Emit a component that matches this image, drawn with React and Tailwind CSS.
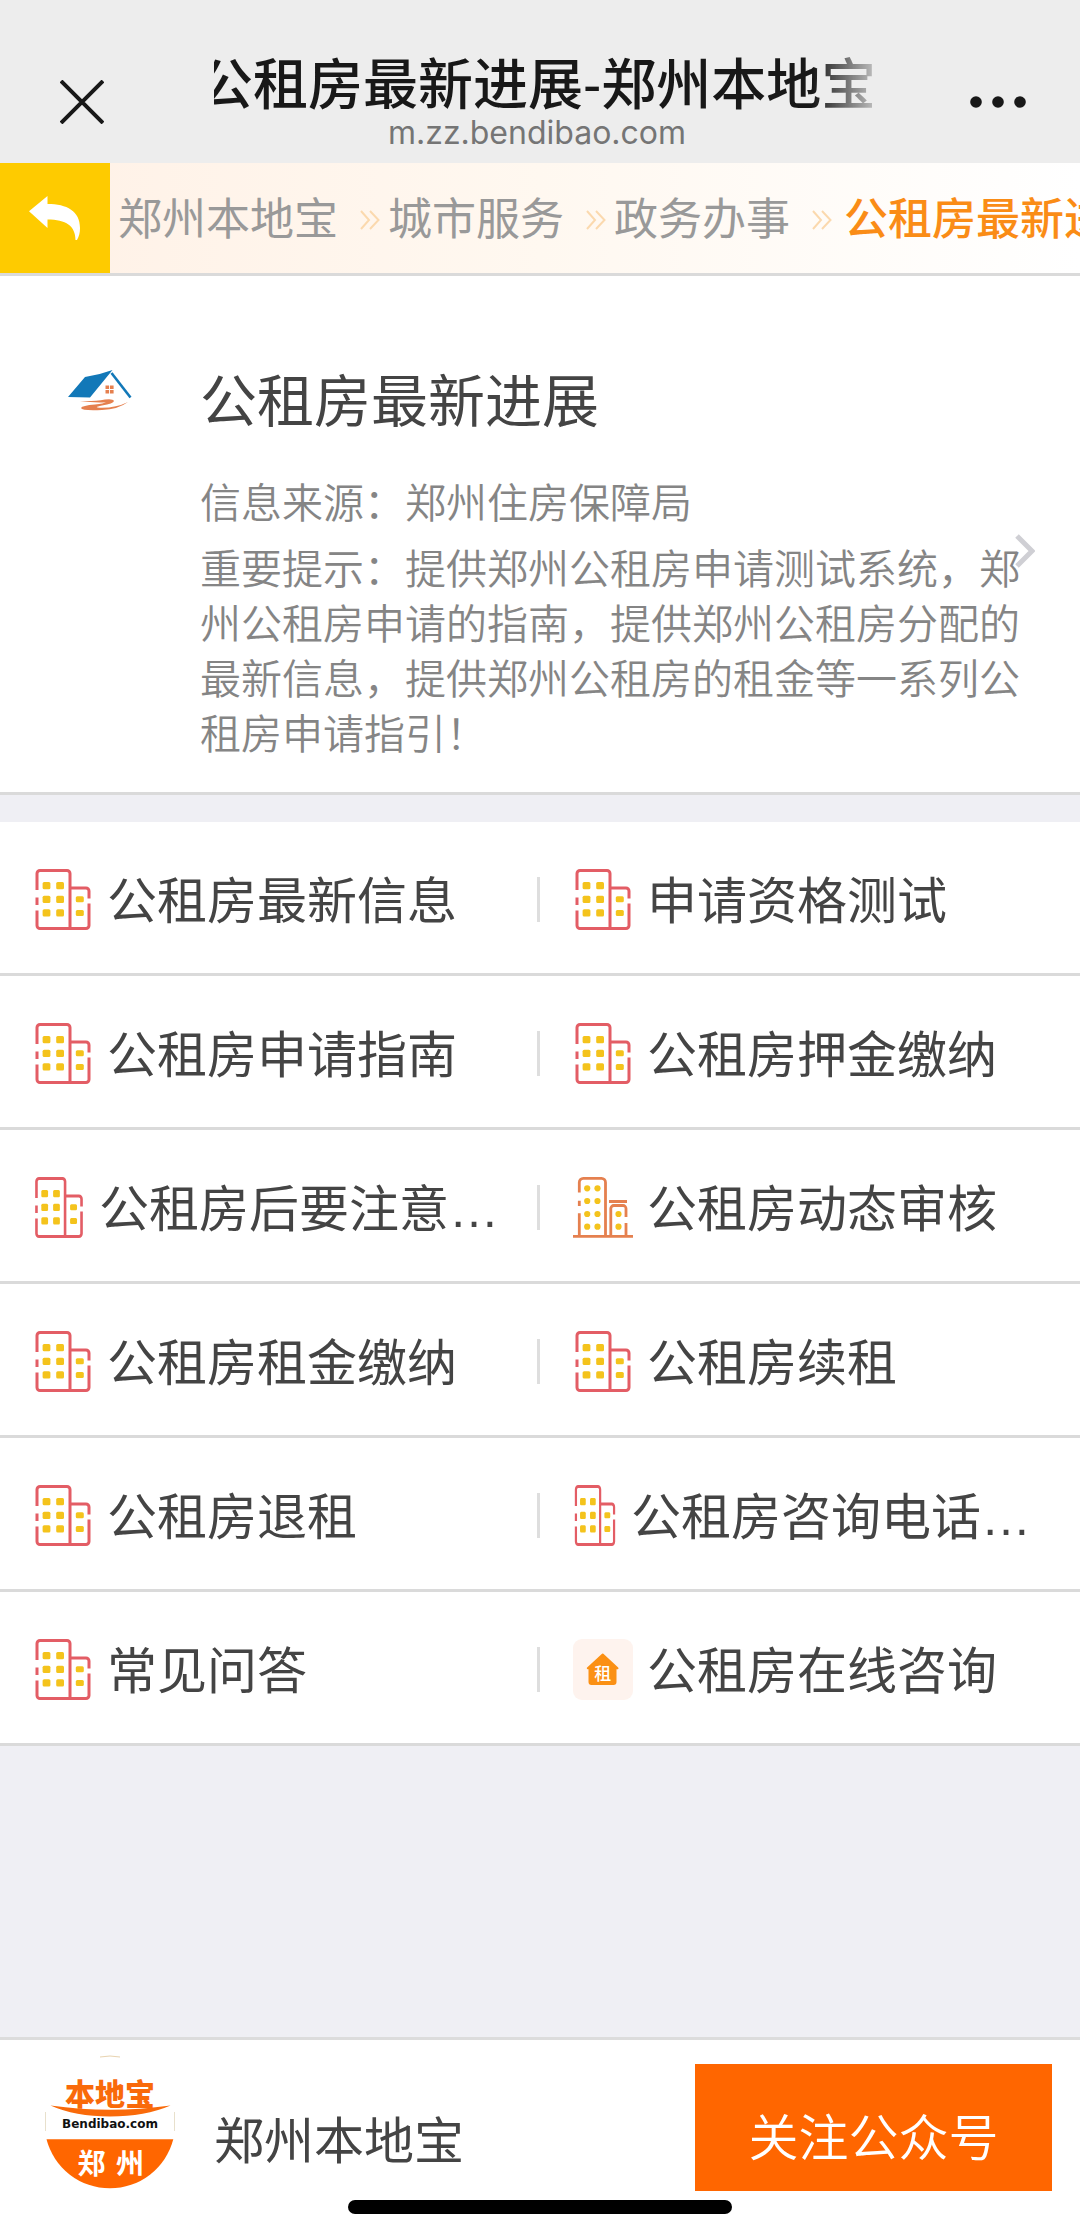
import clsx from "clsx";

const crumbs = ["郑州本地宝", "城市服务", "政务办事"];

const menu = [
  { name: "公租房最新信息", icon: "building" },
  { name: "申请资格测试", icon: "building" },
  { name: "公租房申请指南", icon: "building" },
  { name: "公租房押金缴纳", icon: "building" },
  { name: "公租房后要注意…", icon: "building", size: "w-[52px]" },
  { name: "公租房动态审核", icon: "tower" },
  { name: "公租房租金缴纳", icon: "building" },
  { name: "公租房续租", icon: "building" },
  { name: "公租房退租", icon: "building" },
  { name: "公租房咨询电话…", icon: "building", size: "w-[44px]" },
  { name: "常见问答", icon: "building" },
  { name: "公租房在线咨询", icon: "rent" },
];

const BuildingIcon = ({ className }) => (
  <svg viewBox="0 0 60 62" preserveAspectRatio="none" className={className} fill="none">
    <g stroke="#e35d65" strokeWidth="3">
      <path d="M4 21V4.5a3 3 0 0 1 3-3H34a3 3 0 0 1 3 3V59.5M4 28.5V36M4 41.5V56.5a3 3 0 0 0 3 3H53a3 3 0 0 0 3-3V34.5M37 19H53a3 3 0 0 1 3 3V29.5" />
    </g>
    <g fill="#f4c31c">
      {[13, 26.7, 40.3].map((y) => (
        <g key={y}>
          <rect x="9.6" y={y} width="7.8" height="7.2" rx="1.5" />
          <rect x="23.2" y={y} width="7.8" height="7.2" rx="1.5" />
        </g>
      ))}
      <rect x="42.8" y="27.3" width="8" height="6" rx="1.5" />
      <rect x="42.8" y="41" width="8" height="6" rx="1.5" />
    </g>
  </svg>
);

const TowerIcon = ({ className }) => (
  <svg viewBox="0 0 60 62" className={className} fill="none">
    <g stroke="#e5804f" strokeWidth="2.8">
      <path d="M6.3 15.5V5.4a4 4 0 0 1 4-4H28.5a4 4 0 0 1 4 4V59M6.3 23.7V29M6.3 36.3V59M0 59.3H60" />
      <path d="M36 24.5H54M37.8 59V31.5a3 3 0 0 1 3-3H50a3 3 0 0 1 3 3V40M53 46V59" />
    </g>
    <g fill="#f4c31c">
      {[11.3, 24, 37, 49.7].map((y) => (
        <g key={y}>
          <circle cx="14.2" cy={y} r="3.1" />
          <circle cx="24.5" cy={y} r="3.1" />
        </g>
      ))}
      <circle cx="45.5" cy="37" r="3.1" />
      <circle cx="45.5" cy="49.7" r="3.1" />
    </g>
  </svg>
);

const RentIcon = ({ className }) => (
  <svg viewBox="0 0 60 62" className={className}>
    <rect width="60" height="61" rx="9" fill="#fef3ee" />
    <path
      d="M29.7 15.5L44.5 29.2H42.5V43a2 2 0 0 1-2 2H18.5a2 2 0 0 1-2-2V29.2H14.8Z"
      fill="#fb9014"
      stroke="#fb9014"
      strokeWidth="2"
      strokeLinejoin="round"
    />
    <text x="29.7" y="40.5" fontSize="17" fontWeight="500" textAnchor="middle" fill="#fff">租</text>
  </svg>
);

const icons = { building: BuildingIcon, tower: TowerIcon, rent: RentIcon };

const HouseLogo = () => (
  <svg viewBox="0 0 64 41" className="w-16 shrink-0" fill="none">
    <path d="M0 27L17 7Q31 5 44.5 0L22 27.5Z" fill="#1278b8" />
    <path d="M43.5 3L62.5 27.5" stroke="#1278b8" strokeWidth="2.6" />
    <path d="M37.5 15.5h3.6v3.6h-3.6zM42 15.5h3.6v3.6H42zM37.5 20h3.6v3.6h-3.6zM42 20h3.6v3.6H42z" fill="#e5804f" />
    <path
      d="M12 31Q27 31.5 37 29.5Q45 28.5 46 31Q45.5 33.5 34 35.5Q24 37.5 33 37.8Q48 38 60 32Q50 39.5 34 40Q14 41 13 38Q14 35.5 27 34.5Q36 33.5 38 32.3Q26 33 12 31Z"
      fill="#e5804f"
    />
  </svg>
);

const BendibaoLogo = () => (
  <svg viewBox="0 0 130 136" className="w-[130px] shrink-0">
    <path d="M55 3Q65 1 75 3" stroke="#e8d3b0" fill="none" />
    <path d="M.5 58V77M129.5 58V77" stroke="#e8e0cc" />
    <text x="65" y="51" fontSize="30" fontWeight="900" textAnchor="middle" fill="#f96a0a">本地宝</text>
    <path d="M5.5 51.5Q65 60 125.5 51.5Q100 62.5 65 62.5Q30 62.5 5.5 51.5Z" fill="#f96a0a" />
    <text x="65" y="74" fontSize="12" fontWeight="700" textAnchor="middle" fill="#111" fontFamily="DejaVu Sans">
      Bendibao.com
    </text>
    <path d="M1.5 85.3H128.3A65.5 65.5 0 0 1 1.5 85.3Z" fill="#ff6600" />
    <text x="46.5" y="120" fontSize="28" fontWeight="700" textAnchor="middle" fill="#fff">郑</text>
    <text x="85" y="120" fontSize="28" fontWeight="700" textAnchor="middle" fill="#fff">州</text>
  </svg>
);

const Header = () => (
  <header className="flex h-[163px] items-start justify-between bg-[#ededed] pr-[54px] pl-[60px] text-[#181818]">
    <button aria-label="关闭" className="mt-20 w-11">
      <svg viewBox="0 0 44 44" className="w-11" stroke="currentColor" strokeWidth="4">
        <path d="M1 1L43 43M43 1L1 43" />
      </svg>
    </button>
    <div className="mt-[52px] ml-3 w-[658px] text-center">
      <h1 className="overflow-hidden -indent-4 text-left text-[55px] leading-[66px] font-medium whitespace-nowrap [mask-image:linear-gradient(to_right,black_91%,transparent_103%)]">
        公租房最新进展-郑州本地宝
      </h1>
      <p className="pr-3 font-[Inter] text-[32px] leading-[30px] text-[#757575]">m.zz.bendibao.com</p>
    </div>
    <button aria-label="更多" className="mt-24 w-14">
      <svg viewBox="0 0 56 12" className="w-14" fill="currentColor">
        <circle cx="6" cy="6" r="5.8" />
        <circle cx="28" cy="6" r="5.8" />
        <circle cx="50" cy="6" r="5.8" />
      </svg>
    </button>
  </header>
);

const Breadcrumb = () => (
  <nav className="flex h-[113px] overflow-hidden border-b-3 border-[#dadada] bg-linear-to-r from-[#fff1e6] via-[#fff8f0] to-white">
    <a href="#back" aria-label="返回" className="flex w-[110px] shrink-0 items-center justify-center bg-[#fecb00]">
      <svg viewBox="0 0 52 44" className="w-[52px]" fill="#fff">
        <path d="M0 15.3L18.5 0V8C38 8 51 15 51 32C51 37 50 40 48 44H46.5C46.5 30 37 23.5 18.5 23.5V32Z" />
      </svg>
    </a>
    <div className="flex items-center pt-1 pl-2 text-[44px] whitespace-nowrap text-[#999]">
      {crumbs.map((c) => (
        <div key={c} className="flex items-center">
          <a href="#crumb">{c}</a>
          <svg viewBox="0 0 20 20" className="mr-2 ml-[22px] w-5" fill="none" stroke="#fbd9ae" strokeWidth="2">
            <path d="M1 1L9 10L1 19M10 1L18.5 10L10 19" />
          </svg>
        </div>
      ))}
      <a href="#current" className="pl-1 font-medium text-[#fa8c16]">公租房最新进展</a>
    </div>
  </nav>
);

const Summary = () => (
  <a href="#detail" className="relative flex items-start gap-[68px] border-b-3 border-[#dadada] bg-white pt-[94px] pr-10 pb-[29px] pl-[68px]">
    <HouseLogo />
    <div className="text-[41px] leading-[55px] font-[350] text-[#858585]">
      <h2 className="text-[57px] leading-[64px] font-normal text-[#444]">公租房最新进展</h2>
      <p className="mt-[43px]">信息来源：郑州住房保障局</p>
      <p className="mt-[11px]">
        重要提示：提供郑州公租房申请测试系统，郑州公租房申请的指南，提供郑州公租房分配的最新信息，提供郑州公租房的租金等一系列公租房申请指引！
      </p>
    </div>
    <svg viewBox="0 0 20 34" className="absolute top-1/2 right-[45px] w-5" fill="none" stroke="#cfcfd4" strokeWidth="5">
      <path d="M2 2L17 17L2 32" />
    </svg>
  </a>
);

const MenuItem = ({ item, divider }) => {
  const Icon = icons[item.icon];
  return (
    <a href="#item" className="flex h-[154px] items-center border-b-3 border-[#dadada] pt-1 pl-[33px]">
      <Icon className={clsx("h-[62px] shrink-0", item.size || "w-[60px]")} />
      <span className="ml-3.5 flex-1 pt-1.5 whitespace-nowrap">{item.name}</span>
      {divider && <i className="h-[45px] w-[3px] bg-[#dedede]" />}
    </a>
  );
};

const App = () => {
  return (
    <div className="relative flex min-h-screen flex-col overflow-hidden bg-[#efeff4] font-['Liberation_Sans','Noto_Sans_CJK_SC',sans-serif]">
      <Header />
      <Breadcrumb />
      <Summary />
      <main className="mt-[27px] grid grid-cols-2 bg-white text-[50px] text-[#444]">
        {menu.map((item, index) => (
          <MenuItem key={item.name} item={item} divider={index % 2 === 0} />
        ))}
      </main>
      <footer className="mt-auto flex h-[199px] items-start border-t-3 border-[#dcdcdc] bg-white pt-3.5 pr-7 pl-[45px] text-[50px]">
        <BendibaoLogo />
        <span className="mt-[50px] ml-[39px] flex-1 leading-[76px] text-[#444]">郑州本地宝</span>
        <button className="mt-2.5 h-[127px] w-[357px] bg-[#ff6600] pt-6 font-[350] text-white">关注公众号</button>
      </footer>
      <div className="absolute bottom-[22px] left-1/2 h-3.5 w-96 -translate-x-1/2 rounded-full bg-black" />
    </div>
  );
};

export default App;
